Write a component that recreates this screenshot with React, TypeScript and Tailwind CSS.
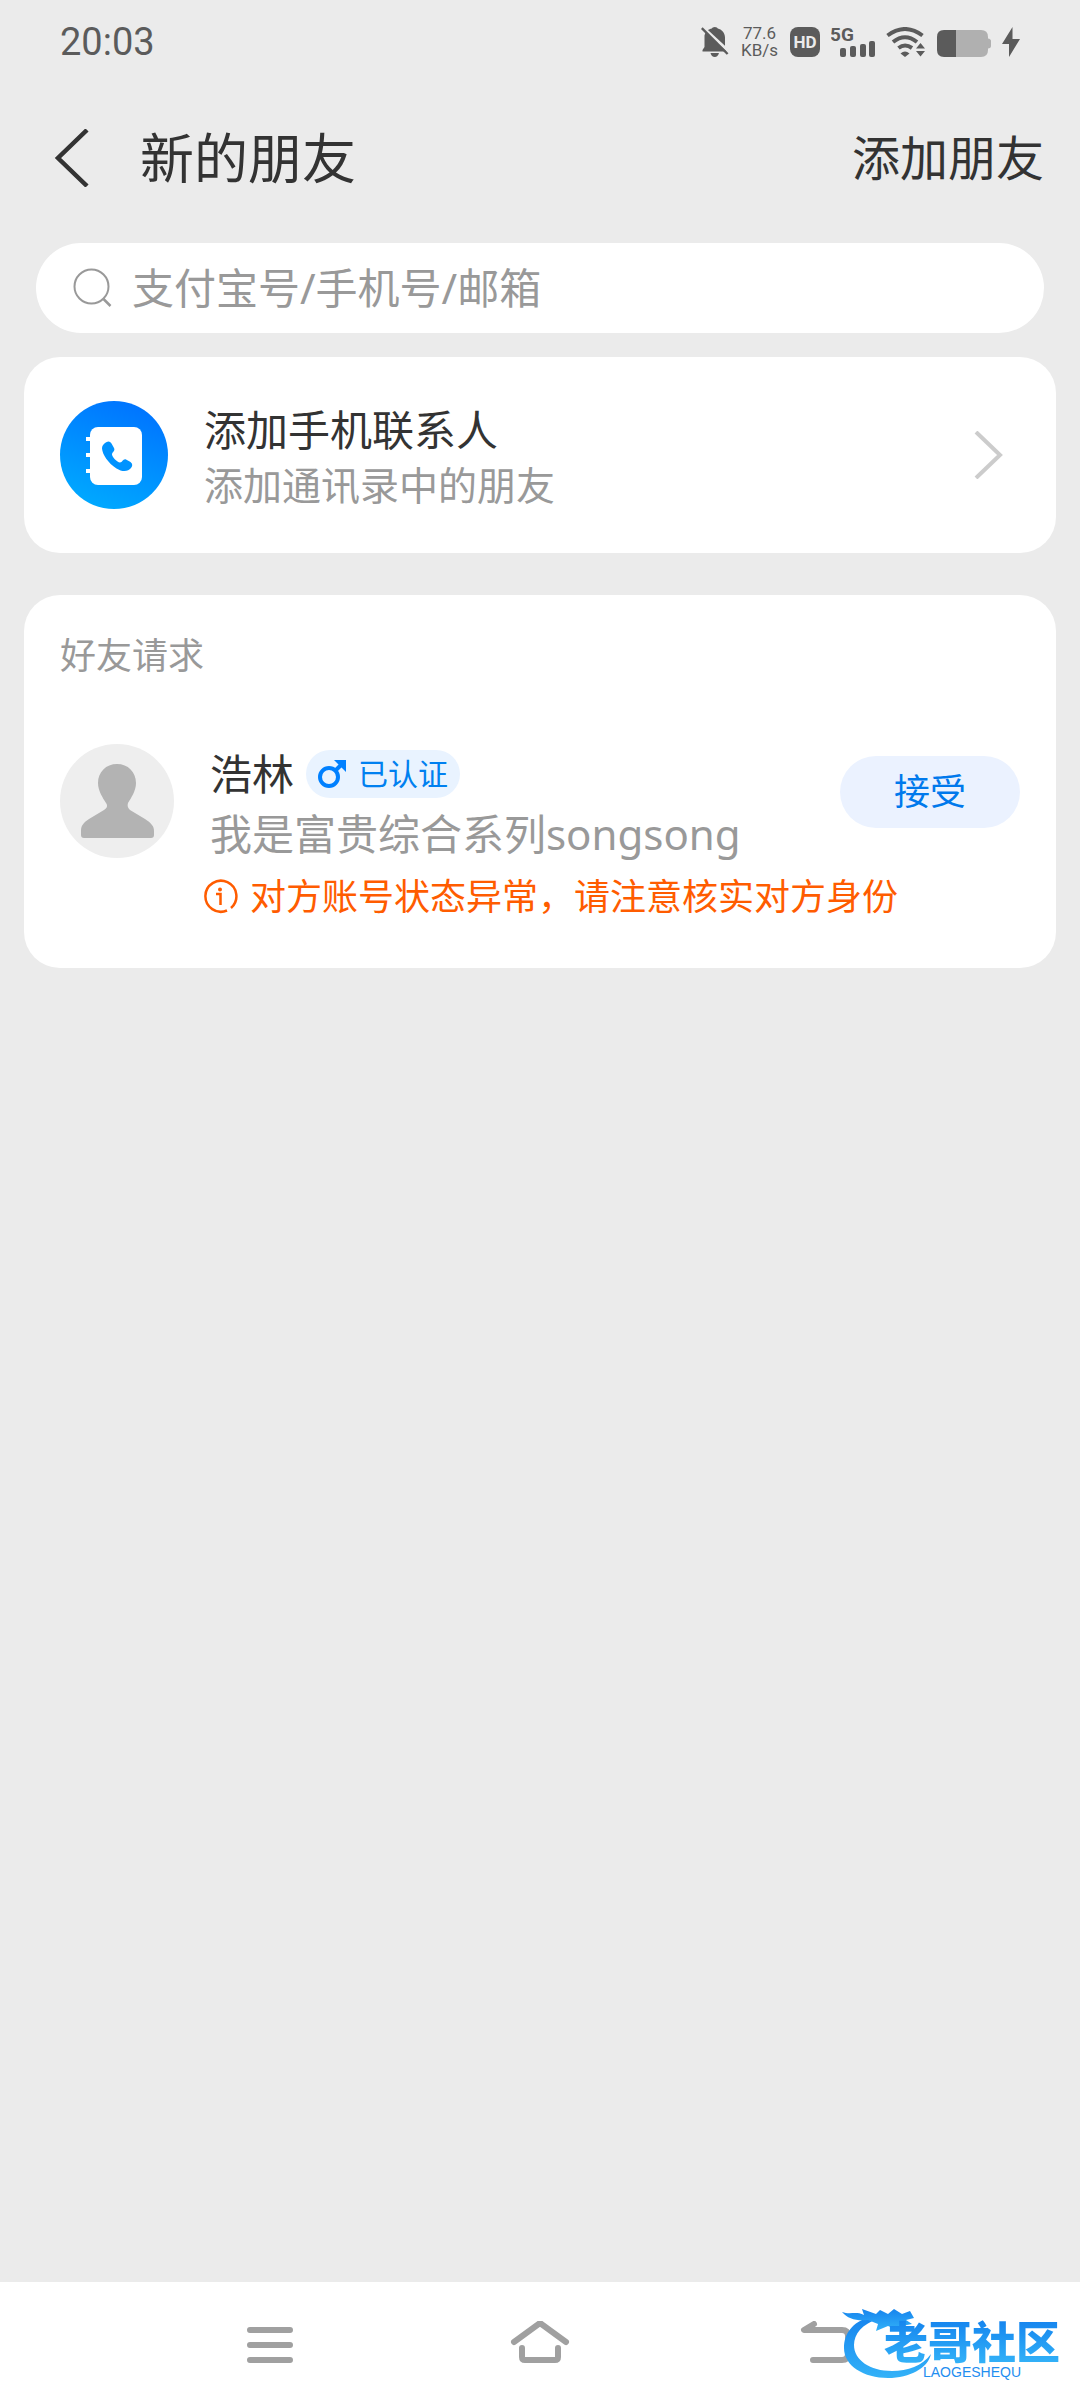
import { ReactNode } from "react";

function BellOffIcon() {
  return (
    <svg viewBox="0 0 28 30" className="h-[30px] w-7" fill="#5b5b5b" aria-hidden="true">
      <path d="M3.5 8.5 C4.5 4.5 8 1.8 10.8 1.5 Q11.2 0 13.8 0 Q16.4 0 16.8 1.5 C20.5 2.4 24 5.8 24 10.5 L24 20 L26 24.5 L1.5 24.5 L1.5 23 L3.5 20 Z" />
      <path d="M9.5 26 H18 C17.2 28.6 15.8 30 13.8 30 C11.6 30 10.2 28.6 9.5 26 Z" />
      <path d="M0 -2 L28 24" stroke="#ebebeb" strokeWidth="3" transform="translate(1.5 2)" />
      <path d="M0.8 1.2 L26.6 27" stroke="#5b5b5b" strokeWidth="2.4" />
    </svg>
  );
}

function SignalIcon() {
  return (
    <svg viewBox="0 0 44 30" className="h-[30px] w-11" fill="#5b5b5b" role="img" aria-label="5G">
      <text x="-1" y="14" fontFamily="Roboto, sans-serif" fontSize="19" fontWeight="700">
        5G
      </text>
      <rect x="9" y="21" width="6" height="9" rx="2" />
      <rect x="19" y="19" width="6" height="11" rx="2" />
      <rect x="29" y="17" width="6" height="13" rx="2" />
      <rect x="38" y="14" width="6" height="16" rx="2" />
    </svg>
  );
}

function WifiIcon() {
  return (
    <svg viewBox="0 0 40 30" className="h-[30px] w-10" aria-hidden="true">
      <g fill="none" stroke="#5b5b5b" strokeWidth="4">
        <path d="M1.5 8.5 Q19 -4.5 36.5 8.5" />
        <path d="M7 15 Q19 5.5 31 15" />
        <path d="M12.5 21 Q19 16 26 21" />
      </g>
      <path d="M14.5 26.5 Q19 22.5 23.5 26.5 L19 30 Z" fill="#5b5b5b" />
      <path d="M34.5 13.5 L41 21.5 L41 30 L28 30 L28 21.5 Z" fill="#ebebeb" />
      <path d="M34.5 16 L39 21.5 H30 Z M34.5 29.5 L39 24 H30 Z" fill="#5b5b5b" />
    </svg>
  );
}

function BatteryIcon() {
  return (
    <svg viewBox="0 0 54 27" className="mt-[3px] h-[27px] w-[54px]" aria-hidden="true">
      <path d="M19 0 H44 Q51 0 51 7 V8.500 Q54 9 54 11 V16 Q54 18 51 18.500 V20 Q51 27 44 27 H19 Z" fill="#b0b0b0" />
      <path d="M19 0 H7 Q0 0 0 7 V20 Q0 27 7 27 H19 Z" fill="#5b5b5b" />
    </svg>
  );
}

function StatusBar() {
  return (
    <div className="flex h-21 items-center justify-between px-15 font-[Roboto,sans-serif] text-[#5b5b5b]">
      <span className="text-[38px] leading-none">20:03</span>
      <div className="flex items-center gap-[11px]">
        <BellOffIcon />
        <div className="flex w-[39px] flex-col items-center text-[17px] leading-[17px]">
          <span>77.6</span>
          <span>KB/s</span>
        </div>
        <span className="flex size-[30px] items-center justify-center rounded-lg bg-[#5b5b5b] text-[17px] leading-none font-bold text-[#ebebeb]">
          HD
        </span>
        <SignalIcon />
        <WifiIcon />
        <BatteryIcon />
        <svg viewBox="0 0 18 30" className="h-[30px] w-[18px]" aria-hidden="true">
          <path d="M10.500 0 L0 17 H7 V30 L18 12 H10.500 Z" fill="#5b5b5b" />
        </svg>
      </div>
    </div>
  );
}

function Header() {
  return (
    <header className="flex h-[148px] items-center justify-between pr-9 pl-[54px] text-[#333333]">
      <div className="flex items-center gap-[50px]">
        <button type="button" aria-label="返回">
          <svg viewBox="0 0 36 58" className="block h-[58px] w-9" fill="none" stroke="#333333" strokeWidth="4.500">
            <path d="M33 1 L4 29 L33 57" />
          </svg>
        </button>
        <h1 className="text-[54px] leading-none">新的朋友</h1>
      </div>
      <button type="button" className="text-5xl leading-none">
        添加朋友
      </button>
    </header>
  );
}

function SearchBox() {
  return (
    <label className="mx-9 mt-[11px] flex h-[90px] items-center gap-5 rounded-full bg-white px-9">
      <svg viewBox="0 0 40 40" className="size-10 shrink-0" fill="none" stroke="#999999" strokeWidth="2" aria-hidden="true">
        <circle cx="19.500" cy="18.500" r="17" />
        <path d="M31.500 31 L38.500 38" strokeWidth="2.500" />
      </svg>
      <input
        type="search"
        aria-label="搜索"
        placeholder="支付宝号/手机号/邮箱"
        className="min-w-0 flex-1 bg-transparent text-[42px] leading-[60px] text-[#333333] outline-none placeholder:text-[#999999]"
      />
    </label>
  );
}

function Card({ children, className }: { children: ReactNode; className: string }) {
  return <section className={`mx-6 rounded-[36px] bg-white px-9 ${className}`}>{children}</section>;
}

function ContactsIcon() {
  return (
    <svg viewBox="0 0 108 108" className="size-27 shrink-0" aria-hidden="true">
      <defs>
        <linearGradient id="contacts" x1="0.700" y1="0" x2="0.300" y2="1">
          <stop offset="0" stopColor="#0073ff" />
          <stop offset="1" stopColor="#00aaff" />
        </linearGradient>
      </defs>
      <circle cx="54" cy="54" r="54" fill="url(#contacts)" />
      <rect x="30" y="26" width="52" height="58" rx="8" fill="#ffffff" />
      <path d="M26 38 H32 M26 54 H32 M26 70 H32" stroke="#ffffff" strokeWidth="4" />
      <path
        d="M45 42 C47.500 39.800 50 40 51.500 42.500 L54 47 C55.500 50 52 51 52 53.500 C52.500 56.500 57 61 60 61.500 C62.500 61.500 63 57.500 66 58.500 L70.500 61 C73 63 72.500 65 71 67 C68 71 62 71 56.500 67.500 C48 62 42.500 53.500 42 47.500 C42 45 43 43.500 45 42 Z"
        fill="#0093ff"
      />
    </svg>
  );
}

function AvatarIcon() {
  return (
    <svg viewBox="0 0 114 114" className="size-[114px] shrink-0" aria-hidden="true">
      <circle cx="57" cy="57" r="57" fill="#eeeeee" />
      <path
        d="M57 20 C68 20 76 28 76 39 C76 47 71 54 68 59 C67 62 68 64 70 66 L85 75 C91 79 94 82 94 87 V91 Q94 94 91 94 H24 Q21 94 21 91 V87 C21 82 23 79 29 75 L44 66 C47 64 48 62 46 59 C43 54 38 47 38 39 C38 28 46 20 57 20 Z"
        fill="#b3b3b3"
      />
    </svg>
  );
}

function ContactsCard() {
  return (
    <Card className="mt-6 py-[43px]">
      <a href="#contacts" className="flex items-center">
        <ContactsIcon />
        <div className="ml-9 flex-1">
          <p className="text-[42px] leading-[60px] text-[#333333]">添加手机联系人</p>
          <p className="text-[39px] leading-[50px] text-[#999999]">添加通讯录中的朋友</p>
        </div>
        <svg viewBox="0 0 30 48" className="mr-4 h-12 w-[30px]" fill="none" stroke="#cccccc" strokeWidth="4" aria-hidden="true">
          <path d="M2 1 L26 24 L2 47" />
        </svg>
      </a>
    </Card>
  );
}

function RequestsCard() {
  return (
    <Card className="mt-[42px] pt-9 pb-[46px]">
      <h2 className="text-4xl leading-[50px] text-[#999999]">好友请求</h2>
      <div className="mt-[63px] flex items-start">
        <AvatarIcon />
        <div className="ml-9 min-w-0 flex-1">
          <div className="flex h-[60px] items-center gap-3">
            <span className="text-[42px] leading-[60px] text-[#333333]">浩林</span>
            <span className="flex h-12 items-center gap-3 rounded-full bg-[#e9f3ff] px-3 text-3xl leading-none text-[#0080f0]">
              <svg viewBox="0 0 28 28" className="size-7" fill="none" stroke="#0080ff" strokeWidth="4" aria-hidden="true">
                <circle cx="11" cy="17" r="9" />
                <path d="M17 11 L24 4" />
                <path d="M16 0 H28 V12 L24 8 L20 4 Z" fill="#0080ff" stroke="none" />
              </svg>
              已认证
            </span>
          </div>
          <p className="text-[42px] leading-[60px] text-[#999999]">我是富贵综合系列songsong</p>
        </div>
        <button type="button" className="mt-3 h-18 w-45 rounded-full bg-[#ebf2ff] text-4xl leading-none text-[#0079ec]">
          接受
        </button>
      </div>
      <p className="mt-2 ml-[142px] flex items-center gap-3 text-4xl leading-[50px] text-[#ff5c00]">
        <svg viewBox="0 0 36 36" className="size-9" fill="none" stroke="#ff5c00" strokeWidth="2.500" aria-hidden="true">
          <path d="M29 29 A15.500 15.500 0 1 0 25 31.500" />
          <path d="M14 15 H18.500 V26" />
          <circle cx="18" cy="10.500" r="2" fill="#ff5c00" stroke="none" />
        </svg>
        对方账号状态异常，请注意核实对方身份
      </p>
    </Card>
  );
}

function Watermark() {
  return (
    <div className="absolute right-5 bottom-7 flex items-end">
      <svg viewBox="0 0 90 78" className="-mr-12 h-[78px] w-[90px]" aria-hidden="true">
        <defs>
          <linearGradient id="dragon" x1="0" y1="0" x2="0" y2="1">
            <stop offset="0" stopColor="#1684ee" />
            <stop offset="1" stopColor="#33b2f8" />
          </linearGradient>
        </defs>
        <g fill="url(#dragon)">
          <path d="M28 15 C10 20 2 32 2 46 C2 64 22 76 46 76 C68 76 86 66 89 52 C80 64 66 69 50 69 C28 69 12 58 12 43 C12 32 20 22 36 17 Z" />
          <path d="M0 10 C8 13 14 9 22 13 L20 7 L34 12 L38 8 L46 12 L52 7 L60 12 L68 9 L72 16 L64 18 L70 22 L60 24 L68 28 L56 28 L46 24 L34 29 L36 22 L26 18 C14 19 6 17 0 10 Z" />
        </g>
      </svg>
      <div className="relative flex flex-col items-center text-[#1f8ef0]">
        <span className="bg-linear-to-b from-[#1684ee] to-[#33b2f8] bg-clip-text text-[44px] leading-[44px] font-black text-transparent">
          老哥社区
        </span>
        <span className="font-[Liberation_Sans,sans-serif] text-sm leading-4">LAOGESHEQU</span>
      </div>
    </div>
  );
}

function NavBar() {
  return (
    <nav className="relative flex h-[126px] items-center justify-center bg-white">
      <button type="button" aria-label="菜单" className="flex w-1/4 justify-center">
        <svg viewBox="0 0 90 48" className="h-12 w-[90px]" fill="none" stroke="#a0a0a0" strokeWidth="6" strokeLinecap="round">
          <path d="M25 9 H65 M25 24 H65 M25 39 H65" />
        </svg>
      </button>
      <button type="button" aria-label="主页" className="flex w-1/4 justify-center">
        <svg viewBox="0 0 90 48" className="h-12 w-[90px]" fill="none" stroke="#a0a0a0" strokeWidth="6" strokeLinecap="round" strokeLinejoin="round">
          <path d="M19 21 L45 2 L71 21" />
          <path d="M27 27 V36 Q27 39 30 39 H60 Q63 39 63 36 V27" />
        </svg>
      </button>
      <button type="button" aria-label="后退" className="flex w-1/4 justify-center">
        <svg viewBox="0 0 90 48" className="h-12 w-[90px]" fill="none" stroke="#a0a0a0" strokeWidth="6" strokeLinecap="round" strokeLinejoin="round">
          <path d="M49 3 L39 9 H77 Q83 9 83 15 V33 Q83 39 77 39 H48" />
        </svg>
      </button>
      <Watermark />
    </nav>
  );
}

export default function App() {
  return (
    <div className="flex min-h-screen flex-col bg-[#ebebeb] font-['Noto_Sans','Noto_Sans_CJK_SC',sans-serif]">
      <StatusBar />
      <Header />
      <main className="flex-1">
        <SearchBox />
        <ContactsCard />
        <RequestsCard />
      </main>
      <NavBar />
    </div>
  );
}
